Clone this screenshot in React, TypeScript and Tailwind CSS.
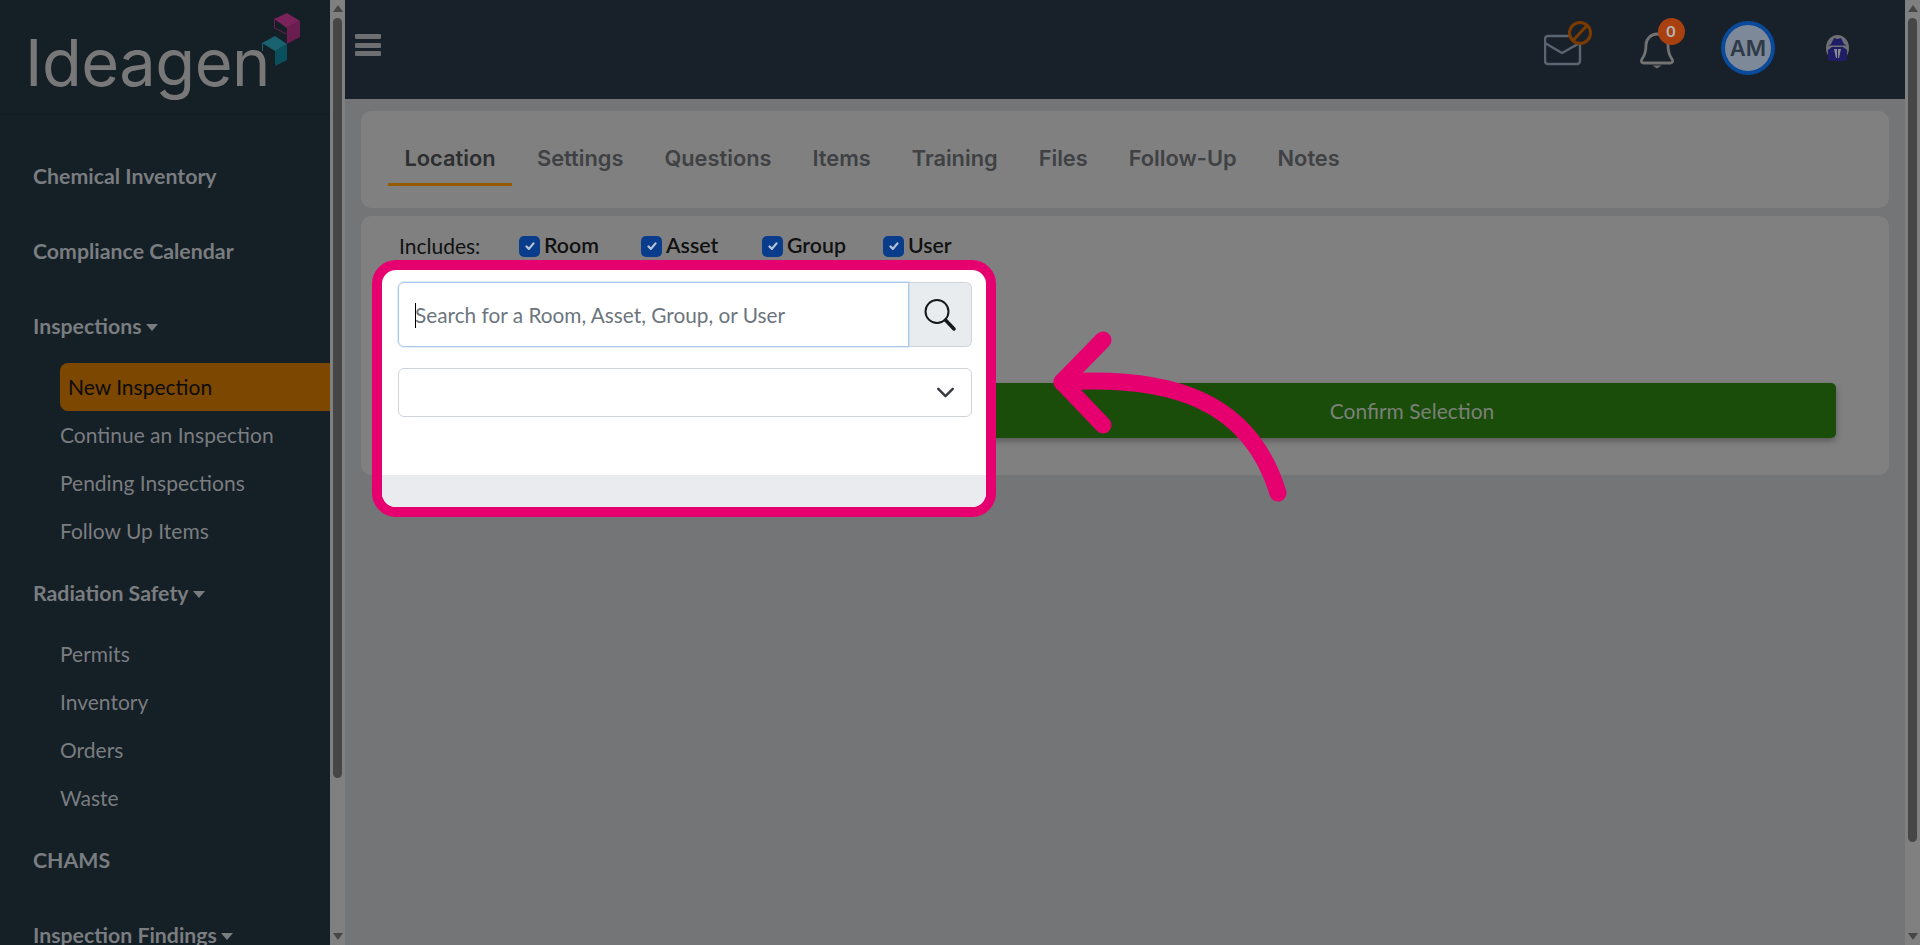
import { ChevronDown } from 'lucide-react';

const lato = "font-['Lato','Liberation_Sans',sans-serif]";

function Check() {
  return (
    <span className="flex h-[21px] w-[21px] items-center justify-center rounded-[5px] bg-[#0a3c8c]">
      <svg viewBox="0 0 16 16" className="h-[14px] w-[14px]" fill="none" stroke="#b4c2d6" strokeWidth="2.6" strokeLinecap="round" strokeLinejoin="round">
        <path d="M4 8.500l2.800 2.800L12 5" />
      </svg>
    </span>
  );
}

function Include({ label, className }: { label: string; className: string }) {
  return (
    <label className={`flex items-center gap-[4px] text-[21.3px] font-semibold text-[#111] ${className}`}>
      <Check />
      {label}
    </label>
  );
}

function Head({ label, caret, className }: { label: string; caret?: boolean; className: string }) {
  return (
    <div className={`flex items-center gap-[4px] pl-[33px] text-[21.3px] font-bold leading-[24px] text-[#7a7d80] ${className}`}>
      {label}
      {caret && <span className="mt-[2px] h-0 w-0 border-x-[6.5px] border-t-[7px] border-x-transparent border-t-[#7a7d80]" />}
    </div>
  );
}

function Sub({ label, active }: { label: string; active?: boolean }) {
  if (active) {
    return (
      <div className="ml-[60px] flex h-[48px] items-center rounded-l-[8px] bg-[#7c4700] pl-[8px] text-[21px] text-[#0c0c0c]">
        {label}
      </div>
    );
  }
  return <div className="ml-[60px] flex h-[48px] items-center text-[21px] text-[#7a7d80]">{label}</div>;
}

function Scrollbar({ thumbHeight }: { thumbHeight: string }) {
  return (
    <div className="flex h-full w-[15px] shrink-0 flex-col items-center bg-[#808080]">
      <span className="mt-[5px] h-0 w-0 border-x-[5px] border-b-[7px] border-x-transparent border-b-[#464646]" />
      <div className={`mt-[6px] w-[9px] rounded-[5px] bg-[#464646] ${thumbHeight}`} />
      <span className="mb-[5px] mt-auto h-0 w-0 border-x-[5px] border-t-[7px] border-x-transparent border-t-[#464646]" />
    </div>
  );
}

const tabs = ['Settings', 'Questions', 'Items', 'Training', 'Files', 'Follow-Up', 'Notes'];

export default function App() {
  return (
    <div className={`relative flex h-[945px] w-[1920px] overflow-hidden bg-[#747577] ${lato}`}>
      {/* Sidebar */}
      <aside className="h-full w-[330px] shrink-0 overflow-hidden bg-[#151f26]">
        <div className="relative h-[115px] border-b border-[#131c22]">
          <span className="absolute left-[25px] top-[24px] font-['Inter',sans-serif] text-[65px] font-normal leading-[78px] tracking-[-0.5px] text-[#787878]">
            Ideagen
          </span>
          <svg className="absolute left-[260px] top-[10px] h-[60px] w-[44px]" viewBox="260 10 44 60">
            <path d="M287 28l13-7v16l-13 7z" fill="#6b1d4f" />
            <path d="M274 19l13-6 13 8-13 7z" fill="#7a2259" />
            <path d="M274.500 19v9l12 6" fill="none" stroke="#6b1d4f" strokeWidth="1" />
            <path d="M275 51l12-7v16l-12 6z" fill="#0a505c" />
            <path d="M262 43l13-7 12 8-12 7z" fill="#1a6270" />
            <path d="M262.500 43v8" fill="none" stroke="#1a6270" strokeWidth="1" />
          </svg>
        </div>
        <Head label="Chemical Inventory" className="mt-[49px]" />
        <Head label="Compliance Calendar" className="mt-[51px]" />
        <Head label="Inspections" caret className="mt-[51px]" />
        <div className="mt-[25px]">
          <Sub label="New Inspection" active />
          <Sub label="Continue an Inspection" />
          <Sub label="Pending Inspections" />
          <Sub label="Follow Up Items" />
        </div>
        <Head label="Radiation Safety" caret className="mt-[26px]" />
        <div className="mt-[25px]">
          <Sub label="Permits" />
          <Sub label="Inventory" />
          <Sub label="Orders" />
          <Sub label="Waste" />
        </div>
        <Head label="CHAMS" className="mt-[26px]" />
        <Head label="Inspection Findings" caret className="mt-[51px]" />
      </aside>
      <Scrollbar thumbHeight="h-[760px]" />

      {/* Main column */}
      <div className="flex h-full min-w-0 flex-1 flex-col">
        <header className="flex h-[99px] shrink-0 items-start bg-[#18212a] pl-[10px] pr-[56px]">
          <div className="mt-[34px] flex w-[26px] flex-col gap-[3.5px]">
            <span className="h-[5px] rounded-[1px] bg-[#6d6f71]" />
            <span className="h-[5px] rounded-[1px] bg-[#6d6f71]" />
            <span className="h-[5px] rounded-[1px] bg-[#6d6f71]" />
          </div>

          {/* Mail, blocked */}
          <svg className="ml-auto mt-[20px] h-[50px] w-[52px]" viewBox="1544 20 52 50" fill="none">
            <path d="M1568 36H1548a3 3 0 0 0-3 3v22a3 3 0 0 0 3 3h29a3 3 0 0 0 3-3V44" stroke="#5a6572" strokeWidth="2.500" strokeLinecap="round" />
            <path d="M1545 43l17 10 16-9" stroke="#5a6572" strokeWidth="2.500" strokeLinecap="round" strokeLinejoin="round" />
            <circle cx="1580" cy="33" r="10.500" stroke="#7a3a00" strokeWidth="3" />
            <path d="M1573 40.500l14-15" stroke="#7a3a00" strokeWidth="3" />
          </svg>

          {/* Bell with count */}
          <div className="relative ml-[38px] mt-[25px] h-[50px] w-[50px]">
            <svg className="h-[50px] w-[50px]" viewBox="1634 25 50 50" fill="none">
              <path d="M1657 34a11 11 0 0 0-11 11c0 9-2 11-4 14-1.500 2-.5 4 1.500 4h27c2 0 3-2 1.500-4-2-3-4-5-4-14a11 11 0 0 0-11-11z" stroke="#727272" strokeWidth="2.800" />
              <path d="M1652.500 65.500h9l-4.500 3z" fill="#727272" />
            </svg>
            <span className="absolute left-[23.500px] top-[-7.500px] flex h-[27px] w-[27px] items-center justify-center rounded-full bg-[#a8400f] text-[16px] font-bold text-[#b4b6ba]">
              0
            </span>
          </div>

          {/* User initials */}
          <span className="ml-[37px] mt-[21px] flex h-[54px] w-[54px] items-center justify-center rounded-full border-[4px] border-[#0a4a9a] bg-[#7d8898] font-['Inter',sans-serif] text-[22px] font-semibold text-[#2f3a48]">
            AM
          </span>

          {/* Spy avatar */}
          <svg className="ml-[51px] mt-[35px] h-[26px] w-[23px]" viewBox="0 0 23 26">
            <ellipse cx="11.500" cy="13" rx="11.500" ry="13" fill="#6f7074" />
            <path d="M2 25V15l4-3h11l4 3v10l-4 1H6z" fill="#1f1d66" />
            <path d="M5 9l3-6 3.500 1L15 3l3 6 3 1.500H2z" fill="#1f1d66" />
            <path d="M8 14l2 9h1v-9zM15 14l-2 9h-1v-9z" fill="#8a8b90" />
          </svg>
        </header>

        <div className="flex min-h-0 flex-1 flex-col gap-[8px] px-[16px] pt-[12px]">
          <div className="flex h-[97px] items-center rounded-[10px] bg-[#808080] pl-[27px]">
            <div className="flex items-center gap-[9px] font-['Inter',sans-serif] text-[21.8px] font-semibold">
              <div className="flex h-[52px] w-[124px] items-center justify-center border-b-[3px] border-[#955a00] pt-[1px] text-[#2c2e30]">
                Location
              </div>
              {tabs.map((t) => (
                <div key={t} className="flex h-[52px] items-center px-[16px] pb-[3px] text-[#3f4144]">
                  {t}
                </div>
              ))}
            </div>
          </div>

          <div className="relative h-[259px] rounded-[10px] bg-[#808080]">
            <div className="flex h-[60px] items-center pl-[38px] text-[21px] text-[#111]">
              <span className="w-[120px]">Includes:</span>
              <Include label="Room" className="w-[122px]" />
              <Include label="Asset" className="w-[121px]" />
              <Include label="Group" className="w-[121px]" />
              <Include label="User" className="" />
            </div>
            <div className="flex justify-end pr-[53px] pt-[107px]">
              <button className="h-[55px] w-[848px] rounded-[5px] bg-[#1a4d0a] text-[21px] text-[#7b8079] shadow-[0_3px_6px_rgba(0,0,0,0.3)]">
                Confirm Selection
              </button>
            </div>
          </div>
        </div>
      </div>
      <Scrollbar thumbHeight="h-[824px]" />

      {/* Callout over the dimmed page */}
      <div className="absolute left-[372px] top-[260px] h-[257px] w-[624px] overflow-hidden rounded-[24px] border-[10px] border-[#e6006f] bg-white">
        <div className="flex h-[205px] flex-col pl-[16px] pr-[14px] pt-[12px]">
          <div className="flex h-[65px]">
            <div className="relative flex flex-1 items-center rounded-l-[6px] border border-[#a9c8ee] pl-[16px] text-[20.8px] text-[#6c757d] shadow-[0_0_0_1px_rgba(169,200,238,0.35)]">
              <span className="absolute left-[16px] top-[20px] h-[25px] w-[1px] bg-black" />
              Search for a Room, Asset, Group, or User
            </div>
            <div className="flex w-[63px] items-center justify-center rounded-r-[6px] border border-l-0 border-[#ced4da] bg-[#e9ecef]">
              <svg viewBox="0 0 34 34" className="h-[34px] w-[34px]" fill="none" stroke="#16191c" strokeLinecap="round">
                <circle cx="14" cy="13.500" r="11.500" strokeWidth="2" />
                <path d="M22.500 22l8.500 9" strokeWidth="3.500" />
              </svg>
            </div>
          </div>
          <div className="mt-[21px] flex h-[49px] items-center justify-end rounded-[6px] border border-[#ced4da] pr-[11.5px]">
            <ChevronDown className="h-[29px] w-[29px] text-[#343a40]" strokeWidth={2} />
          </div>
        </div>
        <div className="h-[32px] bg-[#e9ebee]" />
      </div>

      {/* Arrow */}
      <svg className="pointer-events-none absolute left-[1040px] top-[320px] h-[190px] w-[260px]" viewBox="1040 320 260 190" fill="none" stroke="#e6006f" strokeWidth="17" strokeLinecap="round" strokeLinejoin="round">
        <path d="M1278 493C1250 400 1170 375 1062 382" />
        <path d="M1103 340L1062 382L1103 425" />
      </svg>
    </div>
  );
}
